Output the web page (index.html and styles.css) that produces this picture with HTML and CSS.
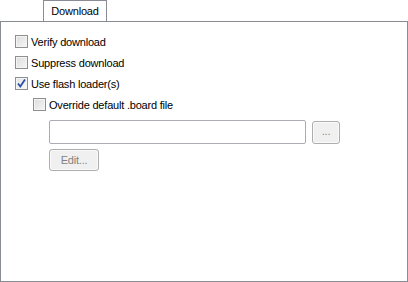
FILE: index.html
```html
<!DOCTYPE html>
<html lang="en">
<head>
    <meta charset="UTF-8">
    <title>Download</title>
    <link rel="stylesheet" href="styles.css">
</head>
<body>
    <div class="tabs">
        <div class="tab">Download</div>
    </div>
    <div class="pane">
        <label class="row"><span class="box"></span>Verify download</label>
        <label class="row"><span class="box"></span>Suppress download</label>
        <label class="row"><span class="box checked"><svg width="11" height="11" viewBox="0 0 11 11"><path d="M2 5.5 L4.3 8.5 L9 1.5" fill="none" stroke="#2b4fa8" stroke-width="1.8"/></svg></span>Use flash loader(s)</label>
        <label class="row sub"><span class="box"></span>Override default .board file</label>
        <div class="file-row">
            <div class="field"></div>
            <div class="btn browse">...</div>
        </div>
        <div class="btn edit">Edit...</div>
    </div>
</body>
</html>
```

FILE: styles.css
```css
body {
    margin: 0;
    background: white;
    font-family: "Liberation Sans", Arial, sans-serif;
    font-size: 11px;
    letter-spacing: -0.2px;
    color: #000;
}

.tabs {
    display: flex;
    padding-left: 43px;
    height: 21px;
}

.tab {
    width: 62px;
    height: 20px;
    border: 1px solid #898c95;
    border-bottom: none;
    background: white;
    text-align: center;
    line-height: 20px;
    position: relative;
    z-index: 1;
    margin-bottom: -1px;
}

.pane {
    box-sizing: border-box;
    height: 261px;
    border: 1px solid #898c95;
    padding: 9px 0 0 14px;
}

.row {
    display: flex;
    align-items: center;
    height: 21px;
}

.row.sub {
    padding-left: 18px;
}

.box {
    width: 11px;
    height: 11px;
    border: 1px solid #8f8f8f;
    background: linear-gradient(135deg, #dcdcdc, #f6f6f6);
    box-shadow: inset 0 0 0 1px #f4f4f4;
    margin-right: 3px;
    display: flex;
    align-items: center;
    justify-content: center;
}

.box.checked {
    background: linear-gradient(135deg, #e4e4e4, #fafafa);
}

.file-row {
    display: flex;
    gap: 6px;
    margin: 5px 0 0 34px;
}

.field {
    width: 255px;
    height: 22px;
    border: 1px solid #abadb3;
    border-radius: 2px;
}

.btn {
    border: 1px solid #adadad;
    border-radius: 3px;
    background: #f0f0f0;
    color: #838383;
    text-align: center;
    box-shadow: inset 0 0 0 1px #fbfbfb;
}

.browse {
    width: 26px;
    height: 21px;
    line-height: 19px;
    margin-top: 1px;
}

.edit {
    width: 48px;
    height: 20px;
    line-height: 20px;
    margin: 5px 0 0 34px;
}
```
